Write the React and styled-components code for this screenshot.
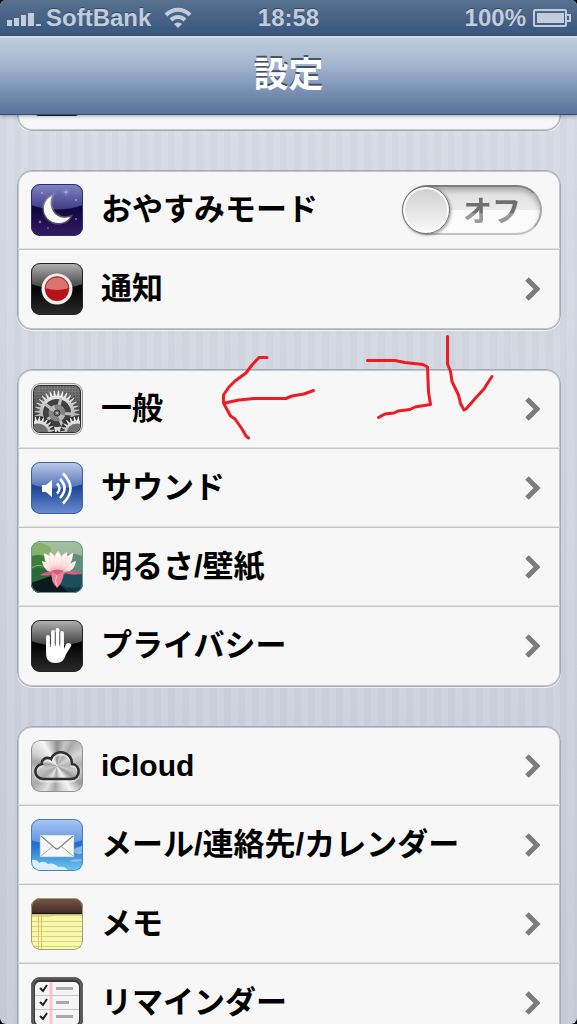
import React from "react";
import styled, { createGlobalStyle } from "styled-components";

const GlobalStyle = createGlobalStyle`
  *, *::before, *::after { box-sizing: border-box; }
  body {
    margin: 0;
    background: #000;
    font-family: "Liberation Sans", "Noto Sans CJK JP", sans-serif;
  }
`;

const Screen = styled.div`
  display: flex;
  flex-direction: column;
  height: 100vh;
  overflow: hidden;
  border-radius: 6px;
  background:
    repeating-linear-gradient(90deg, rgba(90, 110, 150, 0.03) 0 7px, rgba(255, 255, 255, 0.04) 7px 14px),
    linear-gradient(#d9dde6, #c8ccd8);
`;

const StatusBar = styled.header`
  flex: none;
  display: grid;
  grid-template-columns: 1fr auto 1fr;
  align-items: center;
  height: 36px;
  padding: 0 6px;
  background: linear-gradient(#58718f, #3d5a80 80%);
  color: #c2ccda;
  font-size: 24px;
  line-height: 36px;
  font-weight: 700;
  text-shadow: 0 -1px 0 rgba(20, 40, 70, 0.5);
`;

const StatusSide = styled.div`
  display: flex;
  align-items: center;
  gap: ${(p) => p.$gap}px;
  justify-content: ${(p) => (p.$end ? "flex-end" : "flex-start")};
  svg { flex: none; display: block; }
`;

const Carrier = styled.span`
  margin-right: 8px;
`;

const NavBar = styled.div`
  position: relative;
  z-index: 1;
  flex: none;
  height: 79px;
  border-top: 2px solid #d3dee9;
  border-bottom: 1px solid #2c4f80;
  background: linear-gradient(#bfcddb, #a4b5cf 35%, #5a759b 96%, #5a759b);
  box-shadow: 0 1px 4px rgba(0, 0, 0, 0.35);
`;

const Title = styled.h1`
  margin: 0;
  color: #fff;
  font-size: 35px;
  line-height: 74px;
  font-weight: 700;
  text-align: center;
  text-shadow: 0 -2px 0 rgba(50, 65, 90, 0.85);
`;

const Content = styled.main`
  flex: 1;
  min-height: 0;
  overflow-y: auto;
  scrollbar-width: none;
  display: flex;
  flex-direction: column;
  gap: 39px;
  padding: 0 16px 0 17px;
`;

const ScrolledAway = styled.div`
  flex: none;
  display: flex;
  flex-direction: column;
  justify-content: flex-end;
  height: 16px;
  overflow: hidden;
`;

const Group = styled.section`
  position: relative;
  flex: none;
  border: 1px solid #a4a9b3;
  border-radius: 15px;
  background: #f7f7f7;
  box-shadow: inset 0 0 0 1px #c3c7cd, 0 1px 0 rgba(255, 255, 255, 0.75);
`;

const Row = styled.div`
  display: flex;
  align-items: center;
  gap: 18px;
  height: 79px;
  padding: 0 18px 0 13px;
  border-bottom: 1px solid #c5c5c5;
  box-shadow: inset 0 -1px 0 #e2e2e2;
  color: #000;
  text-decoration: none;
  &:last-child { border-bottom-color: transparent; box-shadow: none; }
`;

const Label = styled.span`
  flex: 1;
  font-size: ${(p) => (p.$latin ? 30 : 31)}px;
  line-height: 44px;
  font-weight: 700;
  white-space: nowrap;
`;

const Icon = styled.svg`
  flex: none;
  display: block;
  width: 52px;
  height: 52px;
  border-radius: 9px;
`;

const BrushedIcon = styled(Icon)`
  background: conic-gradient(
    #8f8f8f, #c4c4c4 20deg, #a9a9a9 35deg, #d6d6d6 60deg, #b2b2b2 85deg, #c9c9c9 105deg,
    #999 125deg, #f4f4f4 150deg, #dcdcdc 165deg, #a6a6a6 185deg, #e2e2e2 205deg, #a8a8a8 230deg,
    #c9c9c9 260deg, #a0a0a0 280deg, #d2d2d2 300deg, #f5f5f5 330deg, #8f8f8f
  );
`;

const ChevronSvg = styled.svg`
  flex: none;
  width: 18px;
  height: 24px;
`;

const Toggle = styled.label`
  display: flex;
  align-items: center;
  width: 140px;
  height: 50px;
  border: 2px solid #a6a6a6;
  border-top-color: #7d7d7d;
  border-bottom-color: #c2c2c2;
  border-radius: 25px;
  background: linear-gradient(#dedede, #ebebeb 50%, #fafafa 51%, #fbfbfb);
  box-shadow: inset 0 4px 5px rgba(0, 0, 0, 0.22);
`;

const ToggleInput = styled.input`
  appearance: none;
  flex: none;
  width: 48px;
  height: 48px;
  margin: 0 0 0 -2px;
  border: 1px solid #757575;
  border-radius: 50%;
  background: linear-gradient(#cecece, #fafafa);
  box-shadow: inset 0 0 0 2px #fdfdfd, 1px 1px 3px rgba(0, 0, 0, 0.4);
`;

const ToggleText = styled.span`
  flex: 1;
  padding: 3px 0 0 13px;
  font-size: 29px;
  line-height: 40px;
  font-weight: 700;
  background: linear-gradient(#6f6f6f 54%, #999 58%);
  background-clip: text;
  color: transparent;
`;

const Scribble = styled.svg`
  position: absolute;
  z-index: 1;
  top: -45px;
  left: 192px;
  width: 300px;
  height: 125px;
  pointer-events: none;
`;

const SignalIcon = () => (
  <svg width="35" height="18" viewBox="0 0 35 18" fill="#c2ccda">
    <path d="M1 11h5v6H1zM8 9h5v8H8zM15 6h5v11h-5zM22 4h6v13h-6zM30 15h5v2h-5z" />
  </svg>
);

const WifiIcon = () => (
  <svg width="28" height="22" viewBox="0 0 28 22">
    <g fill="none" stroke="#c2ccda" strokeWidth="4">
      <path d="M2 8C9 1 19 1 26 8" />
      <path d="M7 13c4-4 10-4 14 0" />
    </g>
    <path d="M10 17c3-2 5-2 8 0l-4 4z" fill="#c2ccda" />
  </svg>
);

const BatteryIcon = () => (
  <svg width="38" height="18" viewBox="0 0 38 18">
    <rect x="1" y="1" width="32" height="16" rx="1" fill="none" stroke="#c2ccda" strokeWidth="2" />
    <path d="M4 4h27v10H4z" fill="#c2ccda" />
    <path d="M34 6h3v6h-3" fill="none" stroke="#c2ccda" strokeWidth="2" />
  </svg>
);

const Chevron = () => (
  <ChevronSvg viewBox="0 0 18 24" aria-hidden="true">
    <path d="M3 2l10 10L3 22" fill="none" stroke="#7c7c7c" strokeWidth="5" />
  </ChevronSvg>
);

const Frame = ({ color }) => (
  <rect x="0.5" y="0.5" width="51" height="51" rx="8.5" fill="none" stroke={color} />
);

const Gradient = ({ id, stops }) => (
  <linearGradient id={id} x1="0" y1="0" x2="0" y2="1">
    {stops.map(([offset, color]) => (
      <stop key={offset} offset={offset} stopColor={color} />
    ))}
  </linearGradient>
);

const GLOSS = "M0 0h52v21Q26 30 0 21z";

const MoonIcon = () => (
  <Icon viewBox="0 0 52 52">
    <defs>
      <Gradient id="moonBg" stops={[[0, "#171050"], [0.5, "#10083f"], [1, "#351a63"]]} />
      <Gradient id="moonGloss" stops={[[0, "#8286c5"], [1, "#3d3c83"]]} />
    </defs>
    <rect width="52" height="52" fill="url(#moonBg)" />
    <path d={GLOSS} fill="url(#moonGloss)" />
    <g fill="#a4a6e6">
      <circle cx="11" cy="9" r="1" /><circle cx="45" cy="16" r="1" />
      <circle cx="9" cy="38" r="1.4" opacity=".6" /><circle cx="17" cy="44" r="1" opacity=".5" />
      <circle cx="45" cy="35" r="1" opacity=".7" /><circle cx="35" cy="8" r="1.6" />
      <path d="M35 4v8M31 8h8" stroke="#a4a6e6" strokeWidth=".4" />
    </g>
    <path d="M21 12C10 17 10 33 22 38c8 3 15-1 17-5-7 2-14 0-17-6-3-5-3-10-1-15z" fill="none" stroke="#c9c3a4" strokeWidth="3" strokeOpacity=".35" />
    <path d="M21 12C10 17 10 33 22 38c8 3 15-1 17-5-7 2-14 0-17-6-3-5-3-10-1-15z" fill="#f8f6f1" />
    <Frame color="#2c2b75" />
  </Icon>
);

const BlackBase = ({ id }) => (
  <>
    <defs>
      <Gradient id={`${id}Bg`} stops={[[0, "#000"], [0.5, "#050505"], [1, "#2b2b2b"]]} />
      <Gradient id={`${id}Gloss`} stops={[[0, "#b4b4b4"], [1, "#3c3c3c"]]} />
    </defs>
    <rect width="52" height="52" fill={`url(#${id}Bg)`} />
    <path d={GLOSS} fill={`url(#${id}Gloss)`} />
  </>
);

const NotificationIcon = () => (
  <Icon viewBox="0 0 52 52">
    <BlackBase id="notice" />
    <circle cx="26" cy="26" r="15.5" fill="#eee" />
    <circle cx="26" cy="26" r="12" fill="#b51317" />
    <path d="M14 25a12 12 0 0 1 24 0q-12 4-24 0z" fill="#da7470" />
    <path d="M14 26a12 12 0 0 1 24 0" fill="none" stroke="#b3292b" />
    <Frame color="#222" />
  </Icon>
);

const gearPath = (cx, cy, inner, outer, teeth) => {
  const points = [];
  for (let i = 0; i < teeth; i++) {
    [[0, inner], [0.25, outer], [0.45, outer], [0.7, inner]].forEach(([shift, r]) => {
      const a = ((i + shift) / teeth) * Math.PI * 2;
      points.push(`${(cx + r * Math.cos(a)).toFixed(2)} ${(cy + r * Math.sin(a)).toFixed(2)}`);
    });
  }
  return `M${points.join("L")}Z`;
};

const GearIcon = () => (
  <Icon viewBox="0 0 52 52">
    <defs>
      <Gradient id="gearFill" stops={[[0, "#fafafa"], [0.5, "#b5b5b5"], [1, "#e6e6e6"]]} />
      <Gradient id="gearBg" stops={[[0, "#858585"], [0.6, "#4a4a4a"], [1, "#2b2b2b"]]} />
      <pattern id="mesh" width="3" height="3" patternUnits="userSpaceOnUse">
        <circle cx="1" cy="1" r=".7" fill="#2b2b2b" opacity=".7" />
      </pattern>
      <clipPath id="gearClip"><rect x="3" y="3" width="46" height="46" rx="6" /></clipPath>
    </defs>
    <rect width="52" height="52" fill="#e1e1e1" />
    <rect x="2" y="2" width="48" height="48" rx="7" fill="#2e2e2e" />
    <g clipPath="url(#gearClip)">
      <rect width="52" height="52" fill="url(#gearBg)" />
      <rect width="52" height="52" fill="url(#mesh)" />
      <path d={gearPath(26, 30, 17.5, 22.5, 32)} fill="url(#gearFill)" />
      <circle cx="26" cy="30" r="14" fill="#404040" />
      <g stroke="#bdbdbd" strokeWidth="3">
        <path d="M26 30L30 15M26 30l15 1M26 30l6 14M26 30l-12 8M26 30L14 21" />
      </g>
      <circle cx="26" cy="30" r="8.5" fill="#858585" />
      <path d="M26 30l-8-3a8.5 8.500 0 0 1 5-5zM26 30l8 3a8.500 8.500 0 0 1-5 5z" fill="#bababa" />
      <circle cx="26" cy="30" r="3" fill="#707070" stroke="#333" />
      <circle cx="26" cy="30" r="1" fill="#ccc" />
      {[7, 46].map((cx) => (
        <g key={cx}>
          <circle cx={cx} cy="50" r="17" fill="#333" />
          <path d={gearPath(cx, 50, 12.5, 16.5, 24)} fill="url(#gearFill)" />
          <circle cx={cx} cy="51" r="10.5" fill="#6f6f6f" />
        </g>
      ))}
    </g>
    <Frame color="#979797" />
  </Icon>
);

const SoundIcon = () => (
  <Icon viewBox="0 0 52 52">
    <defs>
      <Gradient id="soundBg" stops={[[0, "#16378a"], [0.5, "#1e479b"], [1, "#6d8dd0"]]} />
      <Gradient id="soundGloss" stops={[[0, "#c0cdea"], [1, "#4d6eb3"]]} />
    </defs>
    <rect width="52" height="52" fill="url(#soundBg)" />
    <path d="M0 0h52v22Q26 31 0 22z" fill="url(#soundGloss)" />
    <path d="M11 23h4l6-5v17l-6-5h-4z" fill="#fff" />
    <g fill="none" stroke="#fff" strokeWidth="2.6">
      <path d="M26 21.500q5 5 0 10" /><path d="M29 17q9 9 0 19" /><path d="M32 11.500q15 15 0 30" />
    </g>
    <Frame color="#3d5f9e" />
  </Icon>
);

const LotusIcon = () => (
  <Icon viewBox="0 0 52 52">
    <defs>
      <Gradient id="lotusBg" stops={[[0, "#a5c09a"], [0.3, "#9ab5a0"], [0.6, "#2f6a55"], [1, "#0e2838"]]} />
      <Gradient id="petal" stops={[[0, "#fffdf6"], [0.6, "#fbe3e0"], [1, "#ee94a2"]]} />
    </defs>
    <rect width="52" height="52" fill="url(#lotusBg)" />
    <path d="M0 3q12-3 20 4v6L0 15z" fill="#83b06b" />
    <path d="M0 15q12-3 17 2l9 14L0 38z" fill="#3f7d3c" />
    <path d="M36 13q10-1 16 3v17l-22-1z" fill="#5f8f7c" />
    <path d="M0 28q15-4 24 6L9 42 0 40z" fill="#2a6a38" />
    <path d="M30 35q12-5 22 0v10q-12 4-22-1z" fill="#1d4e5c" />
    <path d="M0 42l20-7 18 17H0z" fill="#0b1a20" />
    <path d="M0 27q10-6 17 1" fill="none" stroke="#8db56d" />
    <g fill="url(#petal)">
      <path d="M11 20q8 1 15 13-13-1-15-13zM45 20q-6 1-18 13 16 0 18-13z" />
      <path d="M13 12q11 4 13 21-13-7-13-21zM42 12q-10 3-15 21 15-7 15-21z" />
    </g>
    <g fill="url(#petal)" stroke="#f6c9cd" strokeWidth=".4">
      <path d="M19 11q9 5 8 21-11-8-8-21zM36 11q-9 4-10 21 12-8 10-21z" />
      <path d="M27 10q-9 11 0 22 9-11 0-22z" />
    </g>
    <path d="M25 31q-9-2-16 3 11 2 16-3zM32 31q11-2 20 1-10 4-20-1z" fill="#d95d80" />
    <path d="M21 31q6-3 12 0-1 11-7 16-7-7-5-16z" fill="#ea8598" />
    <path d="M26 34q-3 6 0 11" fill="none" stroke="#f9c3ca" />
    <path d="M20 30q6-3 13 0l-7 4z" fill="#d8607a" />
    <Frame color="#6c968f" />
  </Icon>
);

const HandIcon = () => (
  <Icon viewBox="0 0 52 52">
    <BlackBase id="hand" />
    <path d="M17 17v14M22 12v16M26.500 10v17M31 13v17" stroke="#fff" strokeWidth="3.8" strokeLinecap="round" fill="none" />
    <path d="M15.100 24v10c0 6 4 9 9 9 7 0 9-3 11-9l5-8c1-3-3-4-5-2l-2 5V24z" fill="#fff" />
    <path d="M19.500 15v12M24.300 12v14M28.800 12v14" stroke="#444" strokeWidth=".7" />
    <Frame color="#222" />
  </Icon>
);

const CloudIcon = () => (
  <BrushedIcon viewBox="0 0 52 52">
    <path d="M12 39h28c10 0 10-14 1-15 0-13-17-16-21-5-5-3-10 1-9 5-9 2-9 14 1 15z" fill="none" stroke="#fff" strokeWidth="3" transform="translate(0 2)" opacity=".5" />
    <path d="M12 39h28c10 0 10-14 1-15 0-13-17-16-21-5-5-3-10 1-9 5-9 2-9 14 1 15z" fill="none" stroke="#2e2e2e" strokeWidth="2.600" />
    <Frame color="#919191" />
  </BrushedIcon>
);

const MailIcon = () => (
  <Icon viewBox="0 0 52 52">
    <defs>
      <Gradient id="mailBg" stops={[[0, "#1d65ce"], [0.5, "#236ed0"], [1, "#71cbee"]]} />
      <Gradient id="mailGloss" stops={[[0, "#a9c8f4"], [1, "#5b91df"]]} />
    </defs>
    <rect width="52" height="52" fill="url(#mailBg)" />
    <path d={GLOSS} fill="url(#mailGloss)" />
    <path d="M0 41q6-1 8 3 5-3 9 1 6-2 10 3 8-1 10 4H0z" fill="#d9effb" />
    <path d="M42 32q3-4 6-4l4-2v8q-6 3-10-2zM38 42q7-3 14-1-6 3-14 1z" fill="#b7dcf6" opacity=".6" />
    <rect x="9" y="16" width="34" height="22" fill="#f8f8f8" stroke="#9aa7b8" strokeWidth=".6" />
    <path d="M10 37l12-10M42 37L30 27" stroke="#aaa" />
    <path d="M10 17l14 12q2 2 4 0l14-12" fill="#fbfbfb" stroke="#888" strokeWidth="1.200" />
    <Frame color="#4c80b3" />
  </Icon>
);

const NotesIcon = () => (
  <Icon viewBox="0 0 52 52">
    <defs>
      <Gradient id="leather" stops={[[0, "#76564b"], [1, "#452e27"]]} />
      <Gradient id="paper" stops={[[0, "#e8e68f"], [0.15, "#f8f6a3"], [1, "#fbf9a1"]]} />
    </defs>
    <rect width="52" height="52" fill="url(#paper)" />
    <rect width="52" height="15" fill="url(#leather)" />
    <path d="M0 15.5h52" stroke="#211712" strokeWidth="1.5" />
    <path d="M0 18h20l2-1h30" stroke="#b9b778" fill="none" />
    <path d="M0 23.5h52M0 28.5h52M0 33.5h52M0 38.5h52M0 43.5h52M0 48.5h52" stroke="#cdd09a" />
    <path d="M7.5 17v35M10.5 17v35" stroke="#dfbe79" />
    <Frame color="#a09d70" />
  </Icon>
);

const RemindersIcon = () => (
  <Icon viewBox="0 0 52 52">
    <rect width="52" height="52" fill="#3b3b3b" />
    <rect x="2" y="2" width="48" height="48" rx="7" fill="none" stroke="#777" />
    <rect x="4" y="5" width="44" height="43" rx="5" fill="#f5f5f5" />
    <path d="M20 5v43" stroke="#f6c6cb" strokeWidth="3" />
    <path d="M4 18.5h44M4 32.5h44" stroke="#c5c5c5" />
    <path d="M25 11.5h17M25 25.5h13M25 39.5h17" stroke="#aaa" strokeWidth="3" />
    <path d="M9 11l3 3 4-6M9 25l3 3 4-6M9 39l3 3 4-6" fill="none" stroke="#222" strokeWidth="2" />
    <Frame color="#666" />
  </Icon>
);

const NetworkIcon = () => (
  <Icon viewBox="0 0 52 52">
    <BlackBase id="network" />
    <Frame color="#222" />
  </Icon>
);

const LinkRow = ({ icon: Glyph, label, latin }) => (
  <Row as="a" href="#">
    <Glyph />
    <Label $latin={latin}>{label}</Label>
    <Chevron />
  </Row>
);

const HandDrawnMarks = () => (
  <Scribble viewBox="210 325 300 125" aria-hidden="true">
    <g fill="none" stroke="#ed1c24" strokeWidth="3" strokeLinecap="round" strokeLinejoin="round">
      <path d="M267 357.500L259 357.500L252 365L246 373L235 381L229 387L223.500 395V403L230.500 416L235 419L242 429L246 436L248.500 438" />
      <path d="M225 403L239 400L254 398.500H286L292 396L304 394L313.500 390.500" />
      <path d="M367.500 360.500H395L405 362.500L423 364.500L427.500 367L428.500 392L430.500 404.500L415 407L410 409.500L398 411L394 413L385 414L378.500 417.500" />
      <path d="M447.500 336.500V364L450.500 371.500L452 381.500L458.500 395L460.500 403.500L464 410L466 409L476.500 397L484 389L487 384L492 376.500" />
    </g>
  </Scribble>
);

export default function App() {
  return (
    <Screen>
      <GlobalStyle />
      <StatusBar>
        <StatusSide $gap={5}>
          <SignalIcon />
          <Carrier>SoftBank</Carrier>
          <WifiIcon />
        </StatusSide>
        <span>18:58</span>
        <StatusSide $gap={7} $end>
          <span>100%</span>
          <BatteryIcon />
        </StatusSide>
      </StatusBar>
      <NavBar>
        <Title>設定</Title>
      </NavBar>
      <Content>
        <ScrolledAway>
          <Group>
            <Row>
              <NetworkIcon />
            </Row>
          </Group>
        </ScrolledAway>
        <Group>
          <Row>
            <MoonIcon />
            <Label as="label" htmlFor="dnd">おやすみモード</Label>
            <Toggle>
              <ToggleInput type="checkbox" role="switch" id="dnd" />
              <ToggleText>オフ</ToggleText>
            </Toggle>
          </Row>
          <LinkRow icon={NotificationIcon} label="通知" />
        </Group>
        <Group>
          <HandDrawnMarks />
          <LinkRow icon={GearIcon} label="一般" />
          <LinkRow icon={SoundIcon} label="サウンド" />
          <LinkRow icon={LotusIcon} label="明るさ/壁紙" />
          <LinkRow icon={HandIcon} label="プライバシー" />
        </Group>
        <Group>
          <LinkRow icon={CloudIcon} label="iCloud" latin />
          <LinkRow icon={MailIcon} label="メール/連絡先/カレンダー" />
          <LinkRow icon={NotesIcon} label="メモ" />
          <LinkRow icon={RemindersIcon} label="リマインダー" />
        </Group>
      </Content>
    </Screen>
  );
}
